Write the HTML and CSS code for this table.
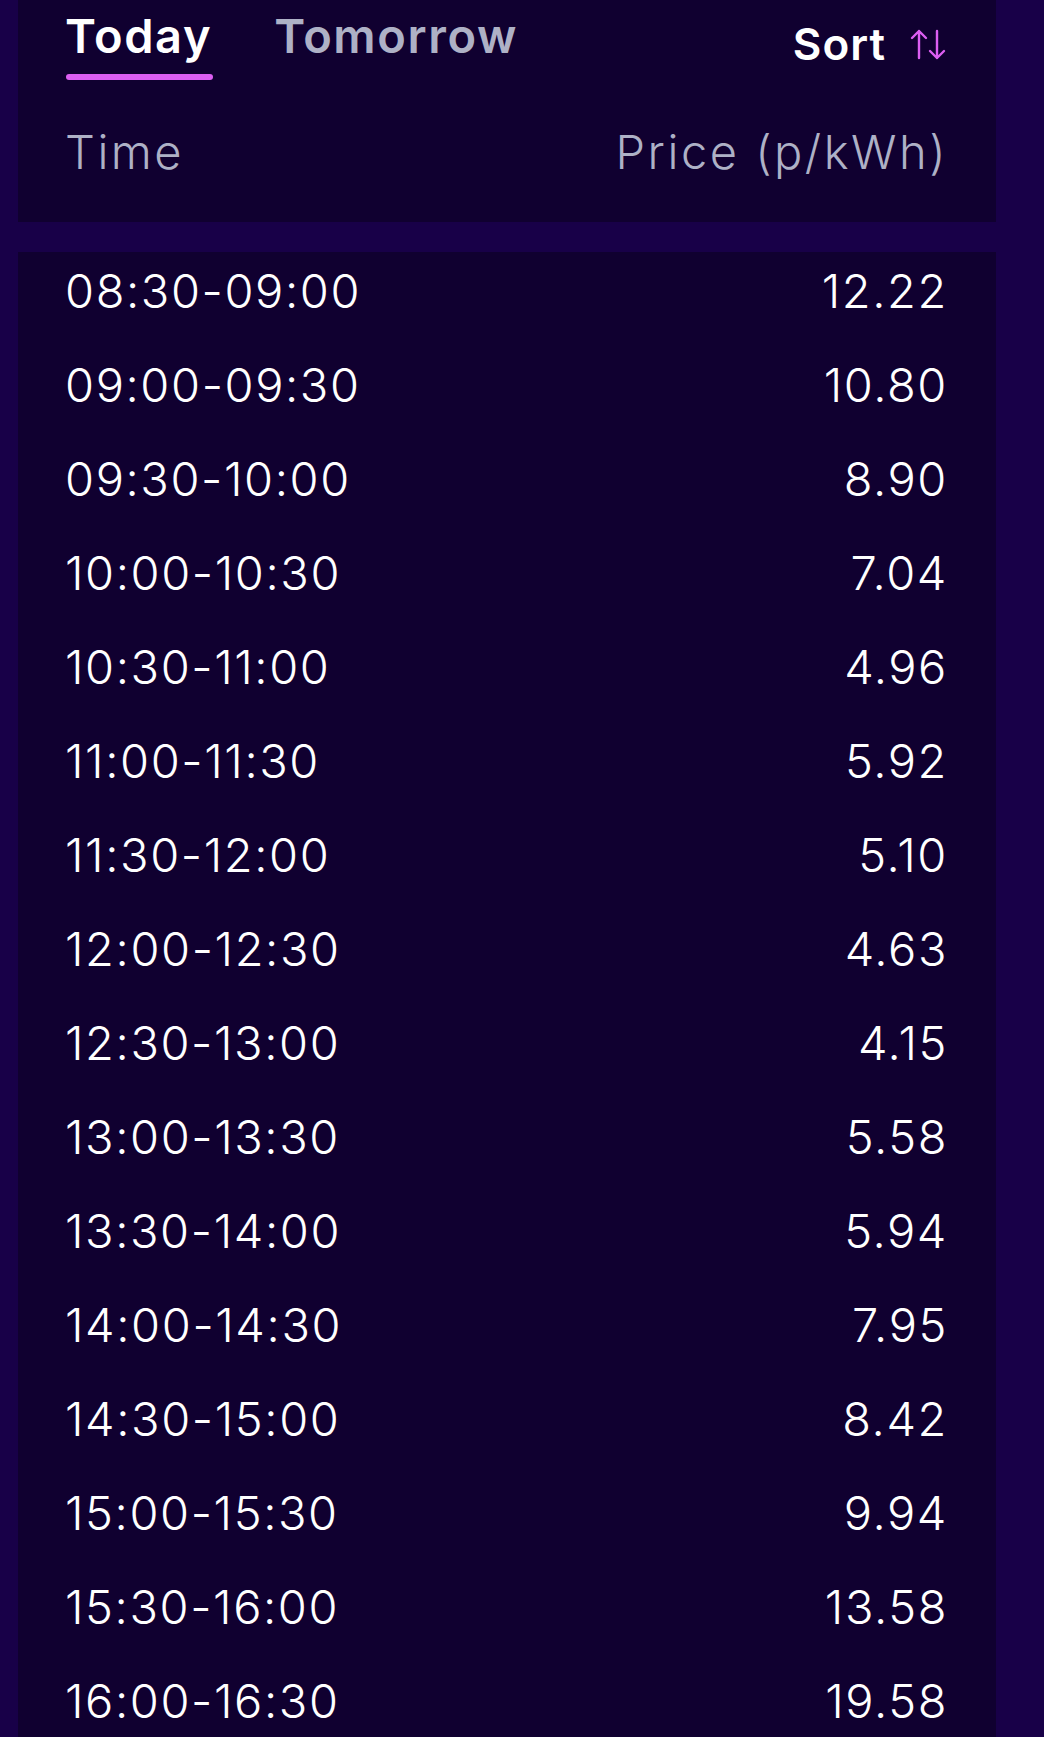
FILE: index.html
```html
<!DOCTYPE html>
<html lang="en">
<head>
  <meta charset="UTF-8" />
  <meta name="viewport" content="width=device-width, initial-scale=1.0"/>
  <title>Agile Prices</title>
  <link rel="stylesheet" href="styles.css">
</head>
<body>

  <div class="page">

    <section class="card head">
      <div class="tabs">
        <a class="tab active" href="#today">Today</a>
        <a class="tab" href="#tomorrow">Tomorrow</a>
        <button class="sort">
          Sort
          <svg width="36" height="31" viewBox="0 0 36 31" fill="none" stroke="#dc5ef2" stroke-width="2.4" stroke-linecap="round" stroke-linejoin="round">
            <path d="M9 29V2M2 9l7-7 7 7"/>
            <path d="M27 2v27M20 22l7 7 7-7"/>
          </svg>
        </button>
      </div>
      <div class="cols">
        <span>Time</span>
        <span>Price (p/kWh)</span>
      </div>
    </section>

    <section class="card list">
      <div class="rows">
        <div class="row"><span>08:30-09:00</span><span>12.22</span></div>
        <div class="row"><span>09:00-09:30</span><span>10.80</span></div>
        <div class="row"><span>09:30-10:00</span><span>8.90</span></div>
        <div class="row"><span>10:00-10:30</span><span>7.04</span></div>
        <div class="row"><span>10:30-11:00</span><span>4.96</span></div>
        <div class="row"><span>11:00-11:30</span><span>5.92</span></div>
        <div class="row"><span>11:30-12:00</span><span>5.10</span></div>
        <div class="row"><span>12:00-12:30</span><span>4.63</span></div>
        <div class="row"><span>12:30-13:00</span><span>4.15</span></div>
        <div class="row"><span>13:00-13:30</span><span>5.58</span></div>
        <div class="row"><span>13:30-14:00</span><span>5.94</span></div>
        <div class="row"><span>14:00-14:30</span><span>7.95</span></div>
        <div class="row"><span>14:30-15:00</span><span>8.42</span></div>
        <div class="row"><span>15:00-15:30</span><span>9.94</span></div>
        <div class="row"><span>15:30-16:00</span><span>13.58</span></div>
        <div class="row"><span>16:00-16:30</span><span>19.58</span></div>
      </div>
    </section>

  </div>

</body>
</html>
```

FILE: styles.css
```css
body {
  margin: 0;
  background: #180048;
  font-family: 'Inter', 'Lato', sans-serif;
  color: #ffffff;
  height: 1737px;
  overflow: hidden;
}

.page {
  padding: 0 48px 0 18px;
}

.card {
  background: #100030;
}

/* header: tabs + column titles */
.head {
  height: 222px;
  padding: 0 50px 0 47px;
  box-sizing: border-box;
}

.tabs {
  display: flex;
  align-items: flex-start;
  gap: 62px;
  padding-top: 8px;
}

.tab {
  position: relative;
  color: #aeb1c6;
  text-decoration: none;
  font-size: 47px;
  font-weight: 600;
  letter-spacing: 1.6px;
  line-height: 56px;
}

.tab.active {
  color: #ffffff;
}

.tab.active::after {
  content: '';
  position: absolute;
  left: 1px;
  right: -1px;
  top: 66px;
  height: 6px;
  border-radius: 3px;
  background: #dc5ef2;
}

.sort {
  margin-left: auto;
  display: flex;
  align-items: center;
  gap: 24px;
  background: none;
  border: none;
  padding: 0;
  margin-top: 10px;
  color: #ffffff;
  font-family: inherit;
  font-size: 44px;
  font-weight: 600;
  letter-spacing: 1px;
  line-height: 52px;
}

.cols {
  display: flex;
  justify-content: space-between;
  margin: 54px -2px 0 0;
  font-size: 47px;
  font-weight: 300;
  letter-spacing: 2.5px;
  line-height: 56px;
  color: #aeb1c6;
}

/* price list */
.list {
  margin-top: 30px;
  height: 1500px;
  overflow: hidden;
}

.rows {
  margin-top: -9px;
  padding: 0 48px 0 47px;
}

.row {
  display: flex;
  justify-content: space-between;
  height: 94px;
  align-items: center;
  font-size: 47px;
  font-weight: 300;
  letter-spacing: 1.6px;
}
```
